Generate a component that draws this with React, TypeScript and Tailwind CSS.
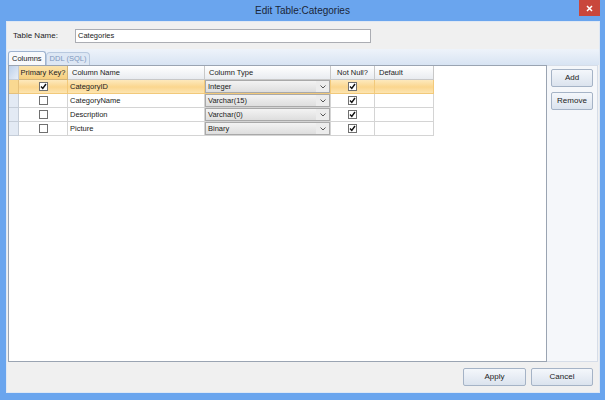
import React from "react";

type Row = { pk: boolean; name: string; type: string; notNull: boolean };

const rows: Row[] = [
  { pk: true, name: "CategoryID", type: "Integer", notNull: true },
  { pk: false, name: "CategoryName", type: "Varchar(15)", notNull: true },
  { pk: false, name: "Description", type: "Varchar(0)", notNull: true },
  { pk: false, name: "Picture", type: "Binary", notNull: true },
];

function Check({ on }: { on: boolean }) {
  return (
    <div className="w-[9px] h-[9px] border border-[#707070] bg-white flex items-center justify-center">
      {on && (
        <svg width="7" height="7" viewBox="0 0 7 7">
          <path d="M1 3.5 L2.8 5.5 L6 1" stroke="#111" strokeWidth="1.4" fill="none" />
        </svg>
      )}
    </div>
  );
}

function Btn({ label, w }: { label: string; w: string }) {
  return (
    <div
      className={`${w} h-[18px] border border-[#a5b3c6] rounded-[2px] bg-gradient-to-b from-[#f4f7fb] to-[#dbe3ee] flex items-center justify-center text-[8px] text-[#222]`}
    >
      {label}
    </div>
  );
}

export default function App() {
  return (
    <div
      className="w-[605px] h-[400px] bg-[#6aa5ee] flex flex-col"
      style={{ fontFamily: '"Liberation Sans", Arial, sans-serif' }}
    >
      {/* title bar */}
      <div className="relative h-[21px] flex items-center justify-center">
        <span className="text-[10px] text-[#1a2638]">Edit Table:Categories</span>
        <div className="absolute top-0 right-[5px] w-[21px] h-[16px] bg-[#c9473c] flex items-center justify-center">
          <svg width="7" height="7" viewBox="0 0 7 7">
            <path d="M1 1 L6 6 M6 1 L1 6" stroke="#fff" strokeWidth="1.5" />
          </svg>
        </div>
      </div>

      {/* client */}
      <div className="flex-1 ml-[6px] mr-[5px] mb-[7px] bg-[#f0f0f0] border border-[#dfe8f4] flex flex-col">
        <div className="h-[26px] flex items-center pl-[6px] pt-[1px]">
          <span className="w-[62px] text-[8px] text-[#222]">Table Name:</span>
          <div className="w-[296px] h-[14px] border border-[#abadb3] bg-white flex items-center pl-[2px] text-[7.5px] text-[#222]">
            Categories
          </div>
        </div>

        {/* tab strip */}
        <div className="mt-[1px] h-[16px] bg-gradient-to-b from-[#eef3fa] to-[#d8e4f3] flex items-end pl-[1px]">
          <div className="h-[14px] px-[3px] bg-[#f7f9fc] border border-b-0 border-[#9eb3cf] rounded-t-[3px] flex items-center text-[7.5px] text-[#222]">
            Columns
          </div>
          <div className="h-[13px] px-[3px] border border-b-0 border-[#b8c9df] rounded-t-[4px] bg-[#dde7f4] flex items-center text-[7.5px] text-[#7d97bd]">
            DDL (SQL)
          </div>
        </div>

        {/* main */}
        <div className="flex-1 flex px-[1px]">
          <div className="flex-1 border border-[#9aa4b2] bg-white flex flex-col">
            {/* header */}
            <div className="flex h-[14px] text-[7.5px] text-[#222]">
              <div className="w-[10px] border-r border-b border-[#c5cdd8] bg-gradient-to-br from-[#bcd0ea] to-[#e8eef7]" />
              <div className="w-[49px] border-r border-b border-[#d1b378] bg-gradient-to-b from-[#fbe3ac] to-[#f6cf7f] flex items-center justify-center">
                Primary Key?
              </div>
              <div className="w-[137px] border-r border-b border-[#c8c8c8] bg-gradient-to-b from-[#ffffff] to-[#e9ecf0] flex items-center pl-[4px]">
                Column Name
              </div>
              <div className="w-[126px] border-r border-b border-[#c8c8c8] bg-gradient-to-b from-[#ffffff] to-[#e9ecf0] flex items-center pl-[4px]">
                Column Type
              </div>
              <div className="w-[44px] border-r border-b border-[#c8c8c8] bg-gradient-to-b from-[#ffffff] to-[#e9ecf0] flex items-center justify-center">
                Not Null?
              </div>
              <div className="w-[59px] border-r border-b border-[#c8c8c8] bg-gradient-to-b from-[#ffffff] to-[#e9ecf0] flex items-center pl-[4px]">
                Default
              </div>
            </div>

            {rows.map((r, i) => {
              const sel = i === 0;
              const cell = sel
                ? "border-r border-b border-[#f2c97a]"
                : "border-r border-b border-[#d4d4d4]";
              return (
                <div
                  key={r.name}
                  className={`flex h-[14px] text-[7.5px] text-[#222] w-[425px] ${
                    sel ? "bg-gradient-to-b from-[#fde9bd] via-[#fbd68e] to-[#fde7b6]" : ""
                  }`}
                >
                  <div
                    className={`w-[10px] border-r border-b ${
                      sel ? "border-[#e5c07b] bg-[#f9d891]" : "border-[#c5cdd8] bg-[#e3eaf4]"
                    }`}
                  />
                  <div className={`w-[49px] ${cell} flex items-center justify-center`}>
                    <Check on={r.pk} />
                  </div>
                  <div className={`w-[137px] ${cell} flex items-center pl-[2px]`}>{r.name}</div>
                  <div className={`w-[126px] ${cell} flex`}>
                    <div className="flex-1 flex border border-[#a9a9a9] bg-gradient-to-b from-[#f3f3f3] to-[#dedede]">
                      <div className="flex-1 flex items-center pl-[2px]">{r.type}</div>
                      <div className="w-[13px] flex items-center justify-center bg-[#ececec]">
                        <svg width="6" height="4" viewBox="0 0 6 4">
                          <path d="M0.5 0.5 L3 3 L5.5 0.5" stroke="#555" strokeWidth="1" fill="none" />
                        </svg>
                      </div>
                    </div>
                  </div>
                  <div className={`w-[44px] ${cell} flex items-center justify-center`}>
                    <Check on={r.notNull} />
                  </div>
                  <div className={`w-[59px] ${cell}`} />
                </div>
              );
            })}
          </div>

          {/* right panel */}
          <div className="w-[51px] border-t border-r border-b border-[#d6dde8] bg-[#f5f7fa] flex flex-col items-center gap-[5px] pt-[3px]">
            <Btn label="Add" w="w-[42px]" />
            <Btn label="Remove" w="w-[42px]" />
          </div>
        </div>

        {/* bottom buttons */}
        <div className="h-[30px] flex items-center justify-end gap-[5px] pr-[6px]">
          <Btn label="Apply" w="w-[63px]" />
          <Btn label="Cancel" w="w-[62px]" />
        </div>
      </div>
    </div>
  );
}
